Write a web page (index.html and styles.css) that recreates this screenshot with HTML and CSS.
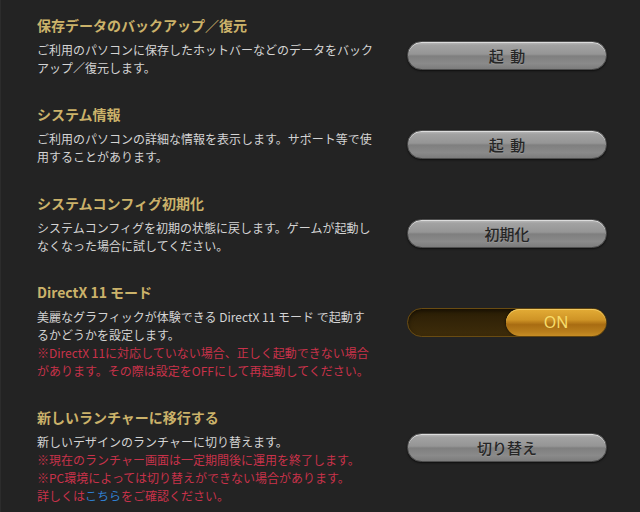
FILE: index.html
```html
<!DOCTYPE html>
<html lang="ja">
<head>
<meta charset="utf-8">
<link rel="stylesheet" href="styles.css">
</head>
<body>
<div class="panel">
  <section class="item">
    <h2 class="title">保存データのバックアップ／復元</h2>
    <p class="desc">ご利用のパソコンに保存したホットバーなどのデータをバック<br>アップ／復元します。</p>
    <button class="btn spaced">起 動</button>
  </section>
  <section class="item">
    <h2 class="title">システム情報</h2>
    <p class="desc">ご利用のパソコンの詳細な情報を表示します。サポート等で使<br>用することがあります。</p>
    <button class="btn spaced">起 動</button>
  </section>
  <section class="item">
    <h2 class="title">システムコンフィグ初期化</h2>
    <p class="desc">システムコンフィグを初期の状態に戻します。ゲームが起動し<br>なくなった場合に試してください。</p>
    <button class="btn">初期化</button>
  </section>
  <section class="item">
    <h2 class="title">DirectX 11 モード</h2>
    <p class="desc">美麗なグラフィックが体験できる DirectX 11 モード で起動す<br>るかどうかを設定します。<br><span class="warn">※DirectX 11に対応していない場合、正しく起動できない場合<br>があります。その際は設定をOFFにして再起動してください。</span></p>
    <div class="toggle"><span class="knob">ON</span></div>
  </section>
  <section class="item">
    <h2 class="title">新しいランチャーに移行する</h2>
    <p class="desc">新しいデザインのランチャーに切り替えます。<br><span class="warn">※現在のランチャー画面は一定期間後に運用を終了します。<br>※PC環境によっては切り替えができない場合があります。<br>詳しくは<a class="link" href="#">こちら</a>をご確認ください。</span></p>
    <button class="btn">切り替え</button>
  </section>
</div>
</body>
</html>
```
FILE: styles.css
```css
html, body {
  margin: 0;
  padding: 0;
  background: #232323;
}
body {
  width: 640px;
  height: 512px;
  overflow: hidden;
  font-family: "Noto Sans CJK JP", "Noto Sans", sans-serif;
  border-left: 1px solid #2c2c2c;
  box-sizing: border-box;
}
.panel {
  padding: 15px 0 0 36px;
}
.item {
  display: grid;
  grid-template-columns: 370px 200px;
  grid-template-rows: auto auto;
  margin-bottom: 27px;
}
.title {
  grid-column: 1;
  grid-row: 1;
  margin: 0 0 6px 0;
  font-size: 14px;
  line-height: 20px;
  font-weight: bold;
  color: #cbb26a;
}
.desc {
  grid-column: 1;
  grid-row: 2;
  margin: 0;
  font-size: 12px;
  line-height: 18px;
  color: #d4d4d4;
}
.warn {
  color: #c8324a;
}
.link {
  color: #2f7fd0;
  text-decoration: none;
}
.btn {
  grid-column: 2;
  grid-row: 2;
  align-self: start;
  width: 200px;
  height: 29px;
  margin: 0;
  padding: 0;
  border: 1px solid #4e4e4e;
  border-radius: 15px;
  background: linear-gradient(#bdbdbd 0%, #a2a2a2 12%, #959595 45%, #7f7f7f 52%, #8a8a8a 80%, #7c7c7c 100%);
  box-shadow: inset 0 1px 0 #dcdcdc, 0 1px 2px rgba(0,0,0,0.6);
  font-family: "Noto Sans CJK JP", sans-serif;
  font-size: 15px;
  font-weight: 500;
  color: #262626;
  line-height: 27px;
  text-shadow: 0 1px 0 rgba(255,255,255,0.15);
}
.spaced {
  word-spacing: 3px;
}
.toggle {
  grid-column: 2;
  grid-row: 2;
  align-self: start;
  width: 200px;
  height: 29px;
  box-sizing: border-box;
  border: 1px solid #6a4c12;
  border-radius: 15px;
  background: linear-gradient(#2a1d05 0%, #342508 50%, #3e2c0a 100%);
  box-shadow: inset 0 2px 4px rgba(0,0,0,0.5);
  display: flex;
  justify-content: flex-end;
}
.knob {
  width: 100px;
  height: 27px;
  border-radius: 14px;
  background: linear-gradient(#e3ac36 0%, #cf9426 40%, #a86c12 58%, #b87e1c 85%, #c78d24 100%);
  box-shadow: inset 0 1px 0 #f0c860, -1px 0 2px rgba(0,0,0,0.4);
  color: #f7dc6a;
  font-size: 16px;
  line-height: 27px;
  text-align: center;
  font-family: "Noto Sans", "Noto Sans CJK JP", sans-serif;
}
```
